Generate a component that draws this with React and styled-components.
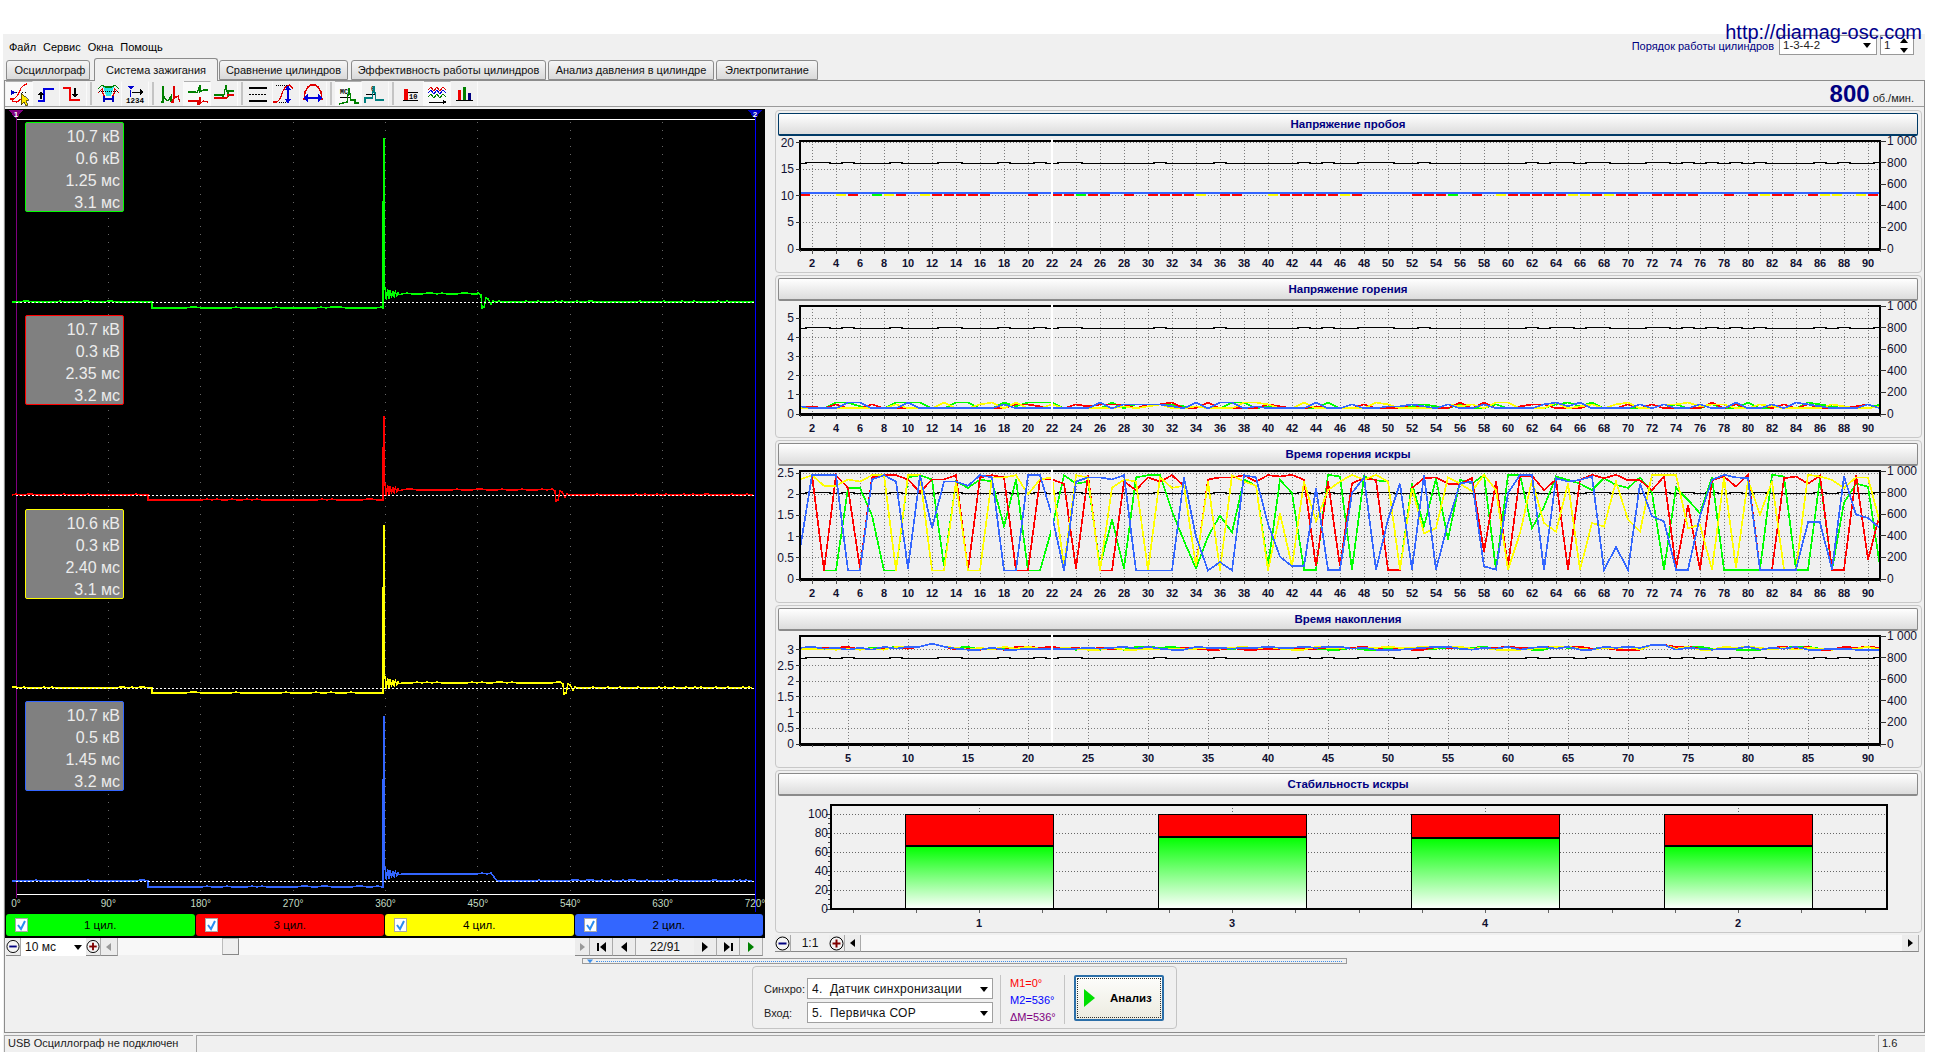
import React from 'react';
import styled, { createGlobalStyle } from 'styled-components';

const GREEN = '#00ff00';
const RED = '#ff0000';
const YELLOW = '#ffff00';
const BLUE = '#3366ff';

const hash = (n) => {
	const v = Math.sin(n * 127.1 + 11.7) * 43758.5453;
	return v - Math.floor(v);
};

const GlobalStyle = createGlobalStyle`
	html, body {
		margin: 0;
		padding: 0;
		background: #fff;
		overflow: hidden;
	}
	* { box-sizing: border-box; }
	body {
		font-family: "Liberation Sans", Arial, sans-serif;
		font-size: 11px;
		color: #000;
	}
`;

const Page = styled.div`
	position: relative;
	width: 1936px;
	height: 1056px;
	padding: 34px 0 0 3px;
`;
const SiteUrl = styled.div`
	position: absolute;
	top: 20px;
	right: 14px;
	font-size: 20px;
	line-height: 24px;
	color: #00008b;
	z-index: 3;
`;
const Window = styled.div`
	width: 1922px;
	height: 1018px;
	background: #f0f0f0;
`;
const MenuBar = styled.div`
	height: 26px;
	display: flex;
	align-items: flex-start;
	justify-content: space-between;
	padding: 1px 11px 0 6px;
`;
const Menu = styled.div`
	display: flex;
	gap: 7px;
	padding-top: 6px;
	font-size: 11px;
	line-height: 13px;
`;
const OrderGroup = styled.div`
	display: flex;
	align-items: flex-start;
	color: #000080;
	font-size: 11px;
	line-height: 13px;
	span { padding-top: 5px; margin-right: 5px; }
`;
const SmallCombo = styled.div`
	width: ${(p) => p.$w}px;
	height: 20px;
	margin-right: 3px;
	border: 1px solid #999;
	background: #fff;
	color: #222;
	display: flex;
	align-items: center;
	justify-content: space-between;
	padding: 0 5px 0 3px;
	font-size: 11.5px;
	&:last-child { margin-right: 0; }
`;
const SpinArrows = styled.div`
	display: flex;
	flex-direction: column;
	gap: 1px;
	svg { display: block; }
`;
const Tabs = styled.div`
	height: 20px;
	display: flex;
	padding-left: 3px;
	position: relative;
	z-index: 2;
`;
const Tab = styled.div`
	width: ${(p) => p.$w}px;
	margin-right: ${(p) => p.$gap}px;
	height: ${(p) => (p.$active ? 23 : 20)}px;
	margin-top: ${(p) => (p.$active ? -2 : 0)}px;
	padding-left: ${(p) => p.$shift || 0}px;
	border: 1px solid #8c8c8c;
	border-bottom: ${(p) => (p.$active ? 'none' : '1px solid #8c8c8c')};
	border-radius: 3px 3px 0 0;
	background: ${(p) => (p.$active ? '#f0f0f0' : 'linear-gradient(#f6f6f6, #d9d9d9)')};
	display: flex;
	align-items: center;
	justify-content: center;
	font-size: 11px;
	color: #111;
	white-space: nowrap;
`;
const Body = styled.div`
	width: 1921px;
	margin-left: 1px;
	height: 953px;
	border: 1px solid #8c8c8c;
`;
const Toolbar = styled.div`
	height: 26px;
	display: flex;
	align-items: stretch;
	padding-left: 1px;
	border-bottom: 1px solid #9a9a9a;
	position: relative;
`;
const ToolBtn = styled.div`
	width: 27px;
	background: ${(p) => (p.$on ? '#f9f9f9' : 'transparent')};
	border-top: 1px solid ${(p) => (p.$on ? '#b0b0b0' : 'transparent')};
	border-right: 1px solid #fafafa;
	svg { display: block; }
`;
const ToolSep = styled.div`
	width: 2px;
	margin: 1px ${(p) => p.$m}px;
	background: #c4c4c4;
`;
const Rpm = styled.div`
	position: absolute;
	right: 10px;
	top: 0;
	height: 25px;
	display: flex;
	align-items: baseline;
	gap: 3px;
	color: #222;
	font-size: 11px;
	b {
		font-size: 24px;
		line-height: 26px;
		color: #000080;
	}
`;
const Main = styled.div`
	height: 849px;
	display: flex;
	gap: 10px;
`;
const LeftCol = styled.div`
	width: 760px;
	padding-top: 2px;
`;
const Scope = styled.div`
	height: 829px;
	background: #000;
	padding: 0 2px 2px 1px;
	display: flex;
	flex-direction: column;
`;
const ScopePlot = styled.div`
	position: relative;
	height: 803px;
	margin: 0 -2px 2px -1px;
	svg { display: block; }
`;
const InfoBox = styled.div`
	position: absolute;
	left: 20px;
	top: ${(p) => p.$top}px;
	width: 99px;
	height: 90px;
	background: #808080;
	border: 1px solid ${(p) => p.$color};
	border-radius: 2px;
	color: #ececec;
	font-size: 16px;
	line-height: 22px;
	text-align: right;
	padding: 3px 3px 0 0;
`;
const Legend = styled.div`
	height: 22px;
	display: flex;
	gap: 1px;
`;
const LegendItem = styled.div`
	flex: 1;
	position: relative;
	background: ${(p) => p.$color};
	border-radius: 3px;
	display: flex;
	align-items: center;
	justify-content: center;
	font-size: 11.5px;
	color: #000;
`;
const Check = styled.div`
	position: absolute;
	left: 9px;
	top: 4px;
	width: 13px;
	height: 14px;
	background: #fff;
	border: 1px solid #a8a8a8;
	svg { display: block; }
`;
const Controls = styled.div`
	height: ${(p) => p.$h}px;
	display: flex;
	align-items: stretch;
	padding: ${(p) => p.$pad};
`;
const RoundBtn = styled.div`
	width: ${(p) => p.$w}px;
	display: flex;
	align-items: center;
	justify-content: center;
	background: #ececec;
	border-right: 1px solid #aaa;
	border-bottom: 1px solid #888;
	svg { display: block; }
`;
const ValueCell = styled.div`
	width: ${(p) => p.$w}px;
	background: ${(p) => p.$bg};
	display: flex;
	align-items: center;
	justify-content: ${(p) => p.$just || 'center'};
	padding: 0 4px;
	font-size: 12px;
	color: #111;
	border-bottom: 1px solid ${(p) => p.$line};
`;
const Track = styled.div`
	flex: 1;
	position: relative;
	background: #f8f8f8;
	border-bottom: 1px solid ${(p) => p.$line};
`;
const Thumb = styled.div`
	position: absolute;
	left: ${(p) => p.$x}px;
	top: 0;
	width: 17px;
	height: 100%;
	background: #efefef;
	border: 1px solid #bbb;
	border-right-color: #888;
	border-bottom-color: #888;
`;
const RightCol = styled.div`
	width: 1147px;
	padding-top: 3px;
	display: flex;
	flex-direction: column;
	gap: 2px;
`;
const Panel = styled.div`
	height: 163px;
	border: 1px solid #c8c8c8;
	border-radius: 4px;
	padding: 2px 3px 0 2px;
	svg { display: block; overflow: visible; }
`;
const PanelTitle = styled.div`
	height: 23px;
	border: 1px solid ${(p) => (p.$focus ? '#003a66' : '#8a8a8a')};
	border-bottom-width: 2px;
	border-radius: 2px;
	background: linear-gradient(#ffffff, #dcdcdc);
	text-align: center;
	font-weight: bold;
	font-size: 11.5px;
	line-height: 21px;
	color: #000080;
`;
const Lower = styled.div`
	height: 76px;
	display: flex;
	flex-direction: column;
	align-items: center;
	padding-top: 2px;
`;
const Splitter = styled.div`
	width: 765px;
	height: 6px;
	border: 1px solid #9a9a9a;
	display: flex;
	align-items: center;
	gap: 3px;
	padding: 0 4px;
	svg { display: block; }
	&::after {
		content: '';
		display: block;
		flex: 1;
		border-top: 1px dotted #3f8fe8;
	}
`;
const AcqBox = styled.div`
	width: 425px;
	height: 63px;
	margin-top: 2px;
	border: 1px solid #c4c4c4;
	border-radius: 4px;
	display: flex;
	align-items: flex-start;
	padding: 8px 0 0 11px;
`;
const FieldGrid = styled.div`
	display: grid;
	grid-template-columns: 43px 186px;
	row-gap: 3px;
	padding-top: 3px;
	font-size: 11px;
	align-items: center;
	color: #222;
`;
const Combo = styled.div`
	height: 21px;
	border: 1px solid #a0a0a0;
	background: #fff;
	display: flex;
	align-items: center;
	justify-content: space-between;
	padding: 0 4px 0 4px;
	font-size: 12px;
	white-space: pre;
	letter-spacing: 0.3px;
	color: #111;
`;
const VLine = styled.div`
	width: 1px;
	height: 49px;
	margin: 0 ${(p) => p.$r}px 0 ${(p) => p.$l}px;
	background: #c4c4c4;
`;
const Marks = styled.div`
	width: 44px;
	font-size: 11px;
	line-height: 17px;
	white-space: nowrap;
`;
const Mark = styled.div`
	color: ${(p) => p.$color};
`;
const AnalyzeBtn = styled.div`
	width: 90px;
	height: 46px;
	border: 2px solid #2b6ea8;
	border-radius: 2px;
	background: linear-gradient(#fdfdfb, #ecebe0);
	display: flex;
	align-items: center;
	position: relative;
	padding-left: 8px;
	font-weight: bold;
	font-size: 11.5px;
	gap: 15px;
	&::after {
		content: '';
		position: absolute;
		inset: 1px;
		border: 1px dotted #333;
	}
	svg { display: block; }
`;
const Status = styled.div`
	height: 17px;
	margin-top: 2px;
	margin-left: 1px;
	display: flex;
	gap: 3px;
	font-size: 11px;
	color: #222;
`;
const StatusCell = styled.div`
	width: ${(p) => p.$w}px;
	flex: ${(p) => (p.$w ? 'none' : 1)};
	border-top: 1px solid #a6a6a6;
	border-left: 1px solid #a6a6a6;
	padding: 0 0 0 3px;
	line-height: 14px;
`;

/* small drawings */
const Tri = ({ dir = 'down', size = 8, color = '#000' }) => {
	const shapes = {
		down: '0,2 8,2 4,7',
		up: '0,6 8,6 4,1',
		left: '6,0 6,8 1,4',
		right: '2,0 2,8 7,4',
	};
	return (
		<svg width={size} height={size} viewBox="0 0 8 8">
			<polygon points={shapes[dir]} fill={color} />
		</svg>
	);
};

const CircleBtn = ({ plus }) => (
	<svg width="15" height="15" viewBox="0 0 15 15">
		<circle cx="7.5" cy="7.5" r="6.5" fill="#f4f4f4" stroke="#000" />
		<rect x="3.5" y="6.5" width="8" height="2" fill={plus ? '#800000' : '#000080'} />
		{plus && <rect x="6.5" y="3.5" width="2" height="8" fill="#800000" />}
	</svg>
);

const NavIcon = ({ kind }) => {
	if (kind === 'first') return <svg width="11" height="10" viewBox="0 0 11 10"><rect x="1" y="1" width="2" height="8" /><polygon points="10,0 10,10 4,5" /></svg>;
	if (kind === 'last') return <svg width="11" height="10" viewBox="0 0 11 10"><rect x="8" y="1" width="2" height="8" /><polygon points="1,0 1,10 7,5" /></svg>;
	if (kind === 'prev') return <svg width="8" height="10" viewBox="0 0 8 10"><polygon points="7,0 7,10 1,5" /></svg>;
	if (kind === 'next') return <svg width="8" height="10" viewBox="0 0 8 10"><polygon points="1,0 1,10 7,5" /></svg>;
	return <svg width="8" height="10" viewBox="0 0 8 10"><polygon points="1,0 1,10 7,5" fill="#008000" /></svg>;
};

const Poly = ({ c, p, w = 1.3, dash }) => (
	<polyline points={p} fill="none" stroke={c} strokeWidth={w} strokeDasharray={dash} />
);

const toolIcons = [
	<>
		<polygon points="5,8 5,13 10,10.5" fill="#0000c0" />
		<Poly c="#000" p="10,10 20,10" dash="1 2" w={1} />
		<Poly c="#f00000" p="4,17 8,17 12,13 15,6 18,3 21,2" />
		<Poly c="#f00000" p="6,19 11,20 15,17" />
		<polygon points="15,11 15,23 18,20 20,24 22,23 20,19 23,18" fill="#ffe600" stroke="#000" strokeWidth="0.6" />
	</>,
	<>
		<Poly c="#0000e0" p="5,19 11,19 11,7 21,7" w={2} />
		<polygon points="5,13 11,13 8,9" fill="#000" />
		<rect x="7" y="13" width="2" height="4" fill="#000" />
	</>,
	<>
		<Poly c="#f00000" p="3,6 10,6 10,18 20,18" w={2} />
		<polygon points="12,12 18,12 15,16" fill="#000" />
		<rect x="14" y="6" width="2" height="6" fill="#000" />
	</>,
	<>
		<polygon points="8,4 19,4 16,14 11,14" fill="#28e8e8" />
		<Poly c="#008000" p="3,7 7,3 10,5 17,5 20,3 24,7" />
		<Poly c="#e00000" p="3,11 7,7 8,12 10,15" />
		<Poly c="#e00000" p="24,11 20,7 19,12 17,15" />
		<Poly c="#000" p="4,9 23,9" dash="1 1" w={1} />
		<Poly c="#0000c0" p="9,17 18,17" />
		<Poly c="#0000c0" p="9,14 9,20" />
		<Poly c="#0000c0" p="18,14 18,20" />
	</>,
	<>
		<polygon points="5,4 12,4 9,8" fill="#0000d0" />
		<rect x="8" y="8" width="1" height="7" fill="#0000d0" />
		<Poly c="#000" p="10,10 20,10" w={1} />
		<polygon points="18,7 18,13 22,10" fill="#000" />
		<text x="4" y="21" fontFamily="Liberation Mono, monospace" fontSize="7.5" fontWeight="bold">1234</text>
	</>,
	<>
		<Poly c="#008000" p="4,20 6,20 6,4 7,16 11,19 14,14 14,20" />
		<Poly c="#e00000" p="14,20 16,20 17,4 18,16 21,14 23,20" />
	</>,
	<>
		<Poly c="#008000" p="4,10 12,10 13,11 16,3 16,10 19,8 24,8" />
		<Poly c="#e00000" p="4,19 13,19 14,22 16,15 16,22 19,19 24,20" />
	</>,
	<>
		<Poly c="#008000" p="3,13 12,13 12,17 15,3 17,15 18,9 23,9" />
		<Poly c="#e00000" p="3,16 13,16 16,16 17,13 23,13" />
	</>,
	<>
		<rect x="3" y="5" width="18" height="2" fill="#000" />
		<Poly c="#000" p="3,12 21,12" dash="2 1" w={1} />
		<rect x="3" y="18" width="18" height="2" fill="#000" />
	</>,
	<>
		<Poly c="#e00000" p="0,20 4,20 7,17 10,9 13,4 17,3 20,7" />
		<Poly c="#000" p="3,3 14,3" dash="1 1" w={1} />
		<Poly c="#000" p="6,20 15,20" dash="1 1" w={1} />
		<rect x="14" y="6" width="2" height="13" fill="#0000e0" />
		<polygon points="12,8 18,8 15,3" fill="#0000e0" />
		<polygon points="12,17 18,17 15,22" fill="#0000e0" />
	</>,
	<>
		<Poly c="#e00000" p="4,18 5,10 8,5 11,3 15,3 18,5 21,10 22,18" w={1.5} />
		<rect x="7" y="15" width="12" height="2" fill="#0000e0" />
		<polygon points="8,12 8,20 3,16" fill="#0000e0" />
		<polygon points="18,12 18,20 23,16" fill="#0000e0" />
	</>,
	<>
		<text x="5" y="12" fontFamily="Liberation Mono, monospace" fontSize="6.5" fontWeight="bold">МС</text>
		<Poly c="#000" p="5,15 15,15" w={1} />
		<Poly c="#008000" p="4,22 12,20 14,6 16,18 20,18 20,21 24,21" />
	</>,
	<>
		<text x="9" y="9" fontFamily="Liberation Mono, monospace" fontSize="6.5" fontWeight="bold">0</text>
		<Poly c="#000" p="4,12 14,12" w={1} />
		<Poly c="#008080" p="3,21 3,16 10,16 12,4 14,18 22,18" />
	</>,
	<>
		<rect x="7" y="7" width="4" height="11" fill="#f00000" />
		<text x="12" y="17" fontFamily="Liberation Mono, monospace" fontSize="7" fontWeight="bold">10</text>
		<rect x="6" y="18" width="15" height="1" fill="#000" />
		<rect x="11" y="10" width="10" height="1" fill="#000" />
	</>,
	<>
		<Poly c="#e00000" p="4,8 7,5 10,9 13,5 16,9 19,5 22,8" w={1} />
		<Poly c="#0000e0" p="4,11 7,8 10,12 13,8 16,12 19,8 22,11" w={1} />
		<Poly c="#008000" p="4,15 7,12 10,16 13,12 16,16 19,12 22,15" w={1} />
		<Poly c="#000" p="5,20 20,20" w={1} />
		<polygon points="19,18 19,22 23,20" fill="#000" />
	</>,
	<>
		<rect x="7" y="8" width="3" height="10" fill="#f00000" />
		<rect x="12" y="5" width="3" height="13" fill="#008000" />
		<rect x="17" y="11" width="3" height="7" fill="#000080" />
		<rect x="5" y="18" width="17" height="1" fill="#000" />
	</>,
];

const toolLayout = [
	[0, 1, 2], [3, 4], [5, 6, 7], [8, 9, 10], [11, 12], [13, 14, 15],
];
const toolOn = new Set([0, 6, 11, 14]);
const sepMargins = [3, 3, 3, 3, 3];

/* chart data */
const S3 = {
	red: [2.35,2.45,.2,2.45,2.15,.25,2.4,2.45,2.45,2.35,
		2.05,2.35,2.35,2.45,.2,2.4,2.45,2.4,.2,.2,
		2.35,2.35,2.25,.25,2.45,.2,.2,2.3,2.1,2.4,
		2.3,2.45,2.2,.3,2.35,2.4,2.4,2.45,2.3,2.45,
		2.42,2.46,2.34,.3,2.3,.3,2.26,2.38,2.34,.22,
		.22,2.15,2.38,2.4,2.25,2.25,2.38,.65,2.3,.3,
		2.44,2.44,2.1,2.35,.22,2.34,2.46,2.38,2.46,2.33,
		2.33,2.1,2.42,.26,1.75,.22,2.33,2.42,2.18,2.46,
		.22,.22,2.38,2.42,2.25,2.44,.22,.22,2.46,.45,1.55],
	green: [2.35,2.45,.2,.2,2.15,2.15,1.5,.2,.2,2.4,
		2.45,2.35,.3,2.3,2.15,2.35,2.3,1.25,2.35,.2,
		.2,1.2,2.45,2.25,2.3,.3,1.4,.25,2.4,2.45,
		2.45,1.6,.9,.25,1,1.5,1.1,2.35,2.2,.3,
		2.34,2.03,.22,.22,2.46,2.42,.22,2.42,2.33,2.3,
		.22,2.26,1.25,2.38,.93,2.34,2.25,2.46,.22,2.46,
		2.46,1.2,1.7,2.42,2.34,2.25,2.1,2.38,2.22,2.15,
		2.4,2.03,.22,2.15,1.87,1.55,2.4,.22,.22,.22,
		.22,2.46,2.42,.22,.22,2.38,.22,1.8,2.25,2.18,.3],
	yellow: [2.35,2.45,2.2,2.2,2.35,2.3,2.45,2.45,.2,2.45,
		2.45,.2,.2,2.3,.2,.2,2.4,2.4,2.45,2,
		2.35,2.4,.3,2.45,2.4,.2,2.15,2.35,2.3,.2,
		2.4,2.15,2.2,.3,2.3,.2,2.45,2.3,2.2,.2,
		1.55,.3,2.3,1.36,2.1,2.3,2.46,2.34,2.46,2.3,
		.22,2.15,1.08,1.2,2.4,2.25,2.07,2.46,2.1,.22,
		1.08,2.34,1.32,1.12,2.26,.22,1.32,1.24,2.3,1.4,
		1.12,2.46,2.46,2.46,1.2,1.28,.22,2.4,.26,2.34,
		1.52,2.3,.22,.22,2.46,2.42,2.34,2.15,2.4,2.4,1.32],
	blue: [.7,2.45,2.45,2.45,.2,.2,2.35,2.45,2.3,.25,
		2.45,1.2,2.3,2.3,2.2,2.45,2.4,.2,.2,2.45,
		2.45,1.5,.2,2.3,2.4,2.4,2.35,2.45,.2,.2,
		.2,.2,2.4,1,.2,.4,.2,2.45,2.4,1.3,
		.53,.3,.3,2.15,.22,.22,2.03,2.4,.22,1.4,
		2.25,.22,2.46,.22,1.32,2.26,2.3,.3,.22,2.03,
		2.46,2.46,.22,2.38,2.3,2.34,2.42,.22,.75,.22,
		2.25,1.48,1.36,.22,.22,1.48,2.34,2.46,2.4,2.38,
		.22,.22,.22,.22,1.34,1.34,.22,2.42,1.52,1.44,1.2],
};

const digits = (head, seed, pool) => Array.from({ length: 91 }, (_, i) => (
	i < head.length ? +head[i] : pool[Math.floor(hash(i * 3 + seed) * pool.length)]
));
const pool2 = [3, 3, 3, 3, 3, 4, 5, 5, 6];
const S2 = {
	green: digits('443664336663366336', 1, pool2).map((d) => d / 10),
	red: digits('443533533333333333', 2, pool2).map((d) => d / 10),
	yellow: digits('333333335333633563', 3, pool2).map((d) => d / 10),
	blue: digits('433366333633333335', 4, pool2).map((d) => d / 10),
};
S2.green = S2.green.map((v, i) => ([19, 20, 21].includes(i) ? 0.6 : v));
S2.red = S2.red.map((v, i) => ([18, 19, 23, 25, 26].includes(i) ? 0.5 : v));

const bumps4 = (seed) => Array.from({ length: 91 }, (_, i) => {
	let v = 3.05 + (Math.floor(hash(i + seed) * 4) - 1.5) * 0.03;
	if (i === 11) v = 3.2;
	if (i === 10 || i === 12) v = 3.1;
	if (i === 71 || i === 72) v = 3.16;
	return v;
});
const S4 = { green: bumps4(20), red: bumps4(30), yellow: bumps4(40), blue: bumps4(50) };

const idxX = (i) => 800 + i * 12;
const PT = 5;
const PB = 113;
const rpmY = Array.from({ length: 91 }, (_, i) => (hash(i * 3.3 + 1) < 0.3 ? 26.5 : 27.5));

const toPoints = (vals, max) => vals
	.map((v, i) => `${idxX(i)},${(PB - (v / max) * (PB - PT)).toFixed(1)}`)
	.join(' ');

const AxisFrame = ({ left, right }) => (
	<>
		<rect x={left} y={PT} width={right - left} height={PB - PT} fill="none" stroke="#000" strokeWidth="2" />
		<line x1={left - 1} x2={right + 1} y1={PB} y2={PB} stroke="#000" strokeWidth="3" />
	</>
);

const LineChart = ({ max, ticks, xEvery, series, single }) => {
	const xLabels = [];
	for (let v = xEvery; v <= 90; v += xEvery) xLabels.push(v);
	const rv = [0, 200, 400, 600, 800, 1000];
	const seg = [];
	if (single) {
		for (let i = 0; i < 90; i++) {
			const h = hash(i * 5 + 3);
			const c = h < 0.5 ? RED : h < 0.62 ? YELLOW : h < 0.68 ? GREEN : null;
			if (c) seg.push({ i, c });
		}
	}
	return (
		<svg width="1140" height="136" viewBox="778 0 1140 136" shapeRendering="crispEdges">
			{xLabels.map((v) => (
				<line key={v} x1={idxX(v - 1)} x2={idxX(v - 1)} y1={PT} y2={PB} stroke="#7a7a7a" strokeDasharray="1 2" />
			))}
			{ticks.map((t) => {
				const y = PB - (t / max) * (PB - PT);
				return <line key={t} x1="800" x2="1880" y1={y} y2={y} stroke="#7a7a7a" strokeDasharray="1 2" />;
			})}
			<polyline points={rpmY.map((y, i) => `${idxX(i)},${y}`).join(' ')} fill="none" stroke="#000" strokeWidth="1.2" />
			{single && seg.map((s) => (
				<line key={s.i} x1={idxX(s.i)} x2={idxX(s.i + 1) - 2} y1="59" y2="59" stroke={s.c} strokeWidth="2" />
			))}
			{single && <line x1="800" x2="1880" y1="57" y2="57" stroke={BLUE} strokeWidth="1.5" />}
			{series && [['green', GREEN], ['red', RED], ['yellow', YELLOW], ['blue', BLUE]].map(([k, c]) => (
				<polyline key={k} points={toPoints(series[k], max)} fill="none" stroke={c} strokeWidth="1.7" />
			))}
			<AxisFrame left={800} right={1880} />
			<line x1="1052" x2="1052" y1={PT - 2} y2={PB - 2} stroke="#fff" strokeWidth="2" />
			{Array.from({ length: 91 }, (_, i) => (
				<line key={i} x1={idxX(i)} x2={idxX(i)} y1={PB + 1} y2={PB + (xLabels.includes(i + 1) ? 5 : 3)} stroke="#555" />
			))}
			{ticks.map((t) => {
				const y = PB - (t / max) * (PB - PT);
				return <line key={t} x1="796" x2="800" y1={y} y2={y} stroke="#333" />;
			})}
			{rv.map((r) => {
				const y = PB - (r / 1000) * (PB - PT);
				return <line key={r} x1="1880" x2="1886" y1={y} y2={y} stroke="#333" />;
			})}
			<g shapeRendering="auto" fontFamily="Liberation Sans, Arial, sans-serif" fontSize="12" fill="#101030">
				{ticks.map((t) => {
					const y = PB - (t / max) * (PB - PT);
					return <text key={t} x="794" y={y + 4} textAnchor="end">{t}</text>;
				})}
				{rv.map((r) => {
					const y = PB - (r / 1000) * (PB - PT);
					return <text key={r} x="1887" y={y + 4}>{r === 1000 ? '1 000' : r}</text>;
				})}
				{xLabels.map((v) => (
					<text key={v} x={idxX(v - 1)} y={PB + 18} textAnchor="middle" fontWeight="bold" fontSize="11">{v}</text>
				))}
			</g>
		</svg>
	);
};

const bars = [
	{ name: '1', cx: 979, pct: 66 },
	{ name: '3', cx: 1232, pct: 76 },
	{ name: '4', cx: 1485, pct: 74.5 },
	{ name: '2', cx: 1738, pct: 66 },
];

const BarChart = () => {
	const top = 18;
	const base = 113;
	const pY = (p) => base - (p / 100) * (base - top);
	const minor = [];
	for (let x = 853; x < 1880; x += 63.25) minor.push(x);
	return (
		<svg width="1140" height="136" viewBox="778 0 1140 136" shapeRendering="crispEdges">
			<defs>
				<linearGradient id="fade" x1="0" y1="0" x2="0" y2="1">
					<stop offset="0" stopColor="#00ff00" />
					<stop offset="1" stopColor="#ffffff" />
				</linearGradient>
			</defs>
			{[20, 40, 60, 80, 100].map((p) => (
				<line key={p} x1="831" x2="1887" y1={pY(p)} y2={pY(p)} stroke="#666" strokeDasharray="1 2" />
			))}
			{bars.map((b) => (
				<g key={b.name}>
					<line x1={b.cx} x2={b.cx} y1="9" y2={top} stroke="#666" strokeDasharray="1 2" />
					<rect x={b.cx - 74} y={top} width="148" height={pY(b.pct) - top} fill={RED} stroke="#000" />
					<rect x={b.cx - 74} y={pY(b.pct)} width="148" height={base - pY(b.pct)} fill="url(#fade)" stroke="#000" />
					<line x1={b.cx - 74} x2={b.cx + 74} y1={pY(b.pct)} y2={pY(b.pct)} stroke="#000" strokeWidth="2" />
				</g>
			))}
			<rect x="831" y="9" width="1056" height="104" fill="none" stroke="#000" strokeWidth="2" />
			<line x1="830" x2="1888" y1="113" y2="113" stroke="#000" strokeWidth="2" />
			{minor.map((x) => (
				<line key={x} x1={x} x2={x} y1="114" y2="117" stroke="#666" />
			))}
			{Array.from({ length: 21 }, (_, i) => (
				<line key={i} x1={i % 4 === 0 ? 826 : 828} x2="830" y1={pY(i * 5)} y2={pY(i * 5)} stroke="#444" />
			))}
			<g shapeRendering="auto" fontFamily="Liberation Sans, Arial, sans-serif" fontSize="12" fill="#101030">
				{[0, 20, 40, 60, 80, 100].map((p) => (
					<text key={p} x="828" y={pY(p) + 4} textAnchor="end">{p}</text>
				))}
				{bars.map((b) => (
					<text key={b.name} x={b.cx} y="131" textAnchor="middle" fontWeight="bold" fontSize="11">{b.name}</text>
				))}
			</g>
		</svg>
	);
};

/* oscilloscope */
const channels = [
	{ color: GREEN, base: 302, pre: 308, plat: 294, top: 138, end: 478, preX: 152, ring: 8, seed: 1 },
	{ color: RED, base: 495, pre: 500, plat: 490, top: 416, end: 552, preX: 148, ring: 8, seed: 2 },
	{ color: YELLOW, base: 688, pre: 693, plat: 683, top: 525, end: 560, preX: 152, ring: 6, seed: 3 },
	{ color: BLUE, base: 881, pre: 887, plat: 874, top: 716, end: 491, preX: 148, ring: 1, seed: 4 },
];

const tracePoints = (c) => {
	const pts = [];
	const noise = (x, a) => (hash(x * 1.7 + c.seed * 91) > 0.8 ? -a : 0);
	for (let x = 12; x < c.preX; x += 4) pts.push([x, c.base + noise(x, 1)]);
	pts.push([c.preX, c.base], [c.preX, c.pre]);
	for (let x = c.preX + 4; x < 382; x += 5) pts.push([x, c.pre + noise(x, 1)]);
	pts.push([383, c.pre], [383, c.top + (c.pre - c.top) * 0.5], [384, c.top], [384.5, c.plat - 9]);
	for (let i = 0; i < 12; i++) {
		const x = 385 + i * 1.3;
		const a = (6 * (12 - i)) / 12;
		pts.push([x, c.plat + (i % 2 ? a : -a)]);
	}
	const platEnd = c.end;
	for (let x = 402; x < platEnd; x += 5) pts.push([x, c.plat + noise(x, 1)]);
	pts.push([platEnd, c.plat - 1]);
	if (c.ring > 2) {
		pts.push([platEnd + 3, c.plat + 1], [platEnd + 4, c.base + 6], [platEnd + 6, c.base + 5],
			[platEnd + 8, c.base - 4], [platEnd + 10, c.base - 3], [platEnd + 13, c.base + 2],
			[platEnd + 15, c.base - 1]);
	} else {
		pts.push([platEnd + 6, c.base]);
	}
	for (let x = platEnd + 18; x < 755; x += 3) pts.push([x, c.base + noise(x, 1)]);
	return pts.map((p) => p.join(',')).join(' ');
};

const degLabels = [0, 90, 180, 270, 360, 450, 540, 630, 720];
const degX = (d) => 16 + (d / 720) * 739;

const ScopeDrawing = () => (
	<svg width="760" height="803" viewBox="5 109 760 803" shapeRendering="crispEdges">
		{degLabels.slice(1, 8).map((d) => (
			<line key={d} x1={degX(d)} x2={degX(d)} y1="122" y2="894" stroke="#666" strokeDasharray="1 7" />
		))}
		<line x1="16" x2="755" y1="119" y2="119" stroke="#fff" />
		<line x1="16" x2="755" y1="894" y2="894" stroke="#fff" />
		<line x1="16" x2="16" y1="116" y2="898" stroke="#800080" />
		<line x1="755" x2="755" y1="116" y2="912" stroke="#0000ff" />
		{channels.map((c) => (
			<g key={c.seed}>
				<polyline points={tracePoints(c)} fill="none" stroke={c.color} strokeWidth="1.5" />
				<line x1="16" x2="755" y1={c.base} y2={c.base} stroke="#fff" strokeDasharray="2 2" />
			</g>
		))}
		<polygon points="9,110 23,110 16,119" fill="#800080" />
		<polygon points="748,110 762,110 755,119" fill="#0000c0" />
		<g shapeRendering="auto">
			<text x="16" y="117" textAnchor="middle" fontSize="8" fontWeight="bold" fill="#fff" fontFamily="Liberation Sans, sans-serif">1</text>
			<text x="755" y="117" textAnchor="middle" fontSize="8" fontWeight="bold" fill="#fff" fontFamily="Liberation Sans, sans-serif">2</text>
			{degLabels.map((d) => (
				<text key={d} x={degX(d)} y="907" textAnchor="middle" fontSize="10" fill="#c4dcc4" fontFamily="Liberation Sans, sans-serif">{d}°</text>
			))}
		</g>
	</svg>
);

const info = [
	{ top: 13, color: GREEN, rows: ['10.7 кВ', '0.6 кВ', '1.25 мс', '3.1 мс'] },
	{ top: 206, color: RED, rows: ['10.7 кВ', '0.3 кВ', '2.35 мс', '3.2 мс'] },
	{ top: 400, color: YELLOW, rows: ['10.6 кВ', '0.3 кВ', '2.40 мс', '3.1 мс'] },
	{ top: 592, color: BLUE, rows: ['10.7 кВ', '0.5 кВ', '1.45 мс', '3.2 мс'] },
];

const legend = [
	{ color: GREEN, label: '1 цил.' },
	{ color: RED, label: '3 цил.' },
	{ color: YELLOW, label: '4 цил.' },
	{ color: BLUE, label: '2 цил.' },
];

const tabs = [
	{ label: 'Осциллограф', w: 84, gap: 4, shift: 4 },
	{ label: 'Система зажигания', w: 124, gap: 1, active: true },
	{ label: 'Сравнение цилиндров', w: 129, gap: 3 },
	{ label: 'Эффективность работы цилиндров', w: 195, gap: 2 },
	{ label: 'Анализ давления в цилиндре', w: 166, gap: 2 },
	{ label: 'Электропитание', w: 102, gap: 0 },
];

const panels = [
	{ title: 'Напряжение пробоя', focus: true, chart: <LineChart max={20.3} ticks={[0, 5, 10, 15, 20]} xEvery={2} single /> },
	{ title: 'Напряжение горения', chart: <LineChart max={5.65} ticks={[0, 1, 2, 3, 4, 5]} xEvery={2} series={S2} /> },
	{ title: 'Время горения искры', chart: <LineChart max={2.55} ticks={[0, 0.5, 1, 1.5, 2, 2.5]} xEvery={2} series={S3} /> },
	{ title: 'Время накопления', chart: <LineChart max={3.44} ticks={[0, 0.5, 1, 1.5, 2, 2.5, 3]} xEvery={5} series={S4} /> },
	{ title: 'Стабильность искры', chart: <BarChart /> },
];

const App = () => {
	return (
		<Page>
			<GlobalStyle />
			<SiteUrl>http://diamag-osc.com</SiteUrl>
			<Window>
				<MenuBar>
					<Menu>
						<span>Файл</span>
						<span>Сервис</span>
						<span>Окна</span>
						<span>Помощь</span>
					</Menu>
					<OrderGroup>
						<span>Порядок работы цилиндров</span>
						<SmallCombo $w={98}>1-3-4-2<Tri /></SmallCombo>
						<SmallCombo $w={34}>1<SpinArrows><Tri dir="up" /><Tri /></SpinArrows></SmallCombo>
					</OrderGroup>
				</MenuBar>
				<Tabs>
					{tabs.map((t) => (
						<Tab key={t.label} $w={t.w} $gap={t.gap} $active={t.active} $shift={t.shift}>{t.label}</Tab>
					))}
				</Tabs>
				<Body>
					<Toolbar>
						{toolLayout.map((group, gi) => (
							<React.Fragment key={gi}>
								{group.map((n) => (
									<ToolBtn key={n} $on={toolOn.has(n)}>
										<svg width="26" height="24" viewBox="0 0 26 24" shapeRendering="crispEdges">{toolIcons[n]}</svg>
									</ToolBtn>
								))}
								{gi < sepMargins.length && <ToolSep $m={sepMargins[gi]} />}
							</React.Fragment>
						))}
						<Rpm><b>800</b> об./мин.</Rpm>
					</Toolbar>
					<Main>
						<LeftCol>
							<Scope>
								<ScopePlot>
									<ScopeDrawing />
									{info.map((b) => (
										<InfoBox key={b.top} $top={b.top} $color={b.color}>
											{b.rows.map((r, i) => <div key={i}>{r}</div>)}
										</InfoBox>
									))}
								</ScopePlot>
								<Legend>
									{legend.map((l) => (
										<LegendItem key={l.label} $color={l.color}>
											<Check>
												<svg width="11" height="12" viewBox="0 0 11 12">
													<polyline points="2,6 5,10 9,2" fill="none" stroke="#2a8cf0" strokeWidth="2" />
												</svg>
											</Check>
											{l.label}
										</LegendItem>
									))}
								</Legend>
							</Scope>
							<Controls $h={18} $pad="0 2px 0 1px">
								<RoundBtn $w={15}><CircleBtn /></RoundBtn>
								<ValueCell $w={65} $bg="#fff" $just="space-between" $line="#fff">10 мс<Tri /></ValueCell>
								<RoundBtn $w={15}><CircleBtn plus /></RoundBtn>
								<RoundBtn $w={17}><Tri dir="left" color="#999" /></RoundBtn>
								<Track $line="#f0f0f0"><Thumb $x={104} /></Track>
								<RoundBtn $w={15}><Tri dir="right" color="#999" /></RoundBtn>
								<RoundBtn $w={23}><NavIcon kind="first" /></RoundBtn>
								<RoundBtn $w={23}><NavIcon kind="prev" /></RoundBtn>
								<ValueCell $w={58} $bg="#f0f0f0" $line="#888">22/91</ValueCell>
								<RoundBtn $w={23}><NavIcon kind="next" /></RoundBtn>
								<RoundBtn $w={23}><NavIcon kind="last" /></RoundBtn>
								<RoundBtn $w={23}><NavIcon kind="play" /></RoundBtn>
							</Controls>
						</LeftCol>
						<RightCol>
							{panels.map((p) => (
								<Panel key={p.title}>
									<PanelTitle $focus={p.focus}>{p.title}</PanelTitle>
									{p.chart}
								</Panel>
							))}
							<Controls $h={17} $pad="0 3px 0 0">
								<RoundBtn $w={16}><CircleBtn /></RoundBtn>
								<ValueCell $w={38} $bg="#f0f0f0" $line="#888">1:1</ValueCell>
								<RoundBtn $w={16}><CircleBtn plus /></RoundBtn>
								<RoundBtn $w={16}><Tri dir="left" /></RoundBtn>
								<Track $line="#888" />
								<RoundBtn $w={17}><Tri dir="right" /></RoundBtn>
							</Controls>
						</RightCol>
					</Main>
					<Lower>
						<Splitter><Tri size={6} color="#3f8fe8" /></Splitter>
						<AcqBox>
							<FieldGrid>
								<span>Синхро:</span>
								<Combo>{'4.  Датчик синхронизации'}<Tri /></Combo>
								<span>Вход:</span>
								<Combo>{'5.  Первичка СОР'}<Tri /></Combo>
							</FieldGrid>
							<VLine $l={7} $r={9} />
							<Marks>
								<Mark $color="#ff0000">М1=0°</Mark>
								<Mark $color="#0000ff">М2=536°</Mark>
								<Mark $color="#800080">ΔМ=536°</Mark>
							</Marks>
							<VLine $l={10} $r={9} />
							<AnalyzeBtn>
								<svg width="11" height="18" viewBox="0 0 11 18"><polygon points="0,0 11,9 0,18" fill="#00e000" /></svg>
								Анализ
							</AnalyzeBtn>
						</AcqBox>
					</Lower>
				</Body>
				<Status>
					<StatusCell $w={189}>USB Осциллограф не подключен</StatusCell>
					<StatusCell />
					<StatusCell $w={47}>1.6</StatusCell>
				</Status>
			</Window>
		</Page>
	);
};

export default App;
